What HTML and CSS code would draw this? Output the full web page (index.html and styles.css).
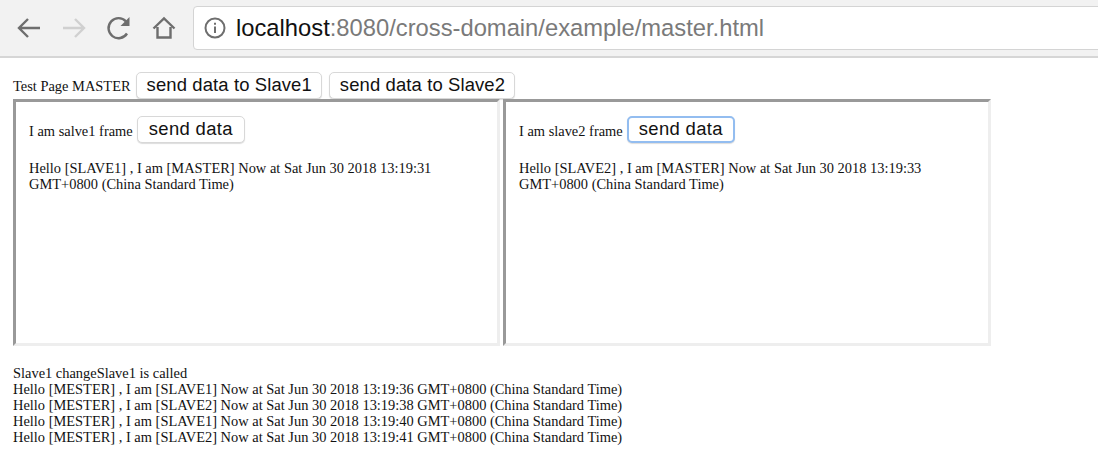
FILE: index.html
```html
<!DOCTYPE html>
<html lang="en">
<head>
  <meta charset="UTF-8" />
  <title>Test Page MASTER</title>
  <link rel="stylesheet" href="styles.css">
</head>
<body>

  <!-- BROWSER TOOLBAR -->
  <div class="toolbar">
    <div class="nav">
      <svg class="icon" viewBox="0 0 26 26" width="26" height="26"><path class="stroke dark" d="M24 13H3M12 4l-9 9 9 9"/></svg>
      <svg class="icon" viewBox="0 0 26 26" width="26" height="26"><path class="stroke light" d="M2 13h21M14 4l9 9-9 9"/></svg>
      <svg class="icon" viewBox="0 0 26 26" width="26" height="26"><path class="stroke dark" d="M21 18.500A10 10 0 1 1 20 6.500"/><path class="fill" d="M23.500 2v9h-9z"/></svg>
      <svg class="icon" viewBox="0 0 26 26" width="26" height="26"><path class="stroke dark" d="M2.500 13.500 13 3.500l10.500 10M6.500 12v10.500h13V12"/></svg>
    </div>
    <div class="address">
      <svg class="info" viewBox="0 0 22 22" width="22" height="22"><circle class="stroke dark thin" cx="11" cy="11" r="9.500"/><path class="fill" d="M10 9.500h2V16h-2zM10 5.800h2v2h-2z"/></svg>
      <span class="url"><b>localhost</b>:8080/cross-domain/example/master.html</span>
    </div>
  </div>

  <!-- MASTER PAGE -->
  <div class="page">
    <div class="head">
      <span>Test Page MASTER</span>
      <button class="btn wide">send data to Slave1</button>
      <button class="btn wide">send data to Slave2</button>
    </div>

    <div class="frames">
      <div class="frame">
        <div class="frame-head">
          <span>I am salve1 frame</span>
          <button class="btn">send data</button>
        </div>
        <p>Hello [SLAVE1] , I am [MASTER] Now at Sat Jun 30 2018 13:19:31 GMT+0800 (China Standard Time)</p>
      </div>
      <div class="frame">
        <div class="frame-head">
          <span>I am slave2 frame</span>
          <button class="btn focus">send data</button>
        </div>
        <p>Hello [SLAVE2] , I am [MASTER] Now at Sat Jun 30 2018 13:19:33 GMT+0800 (China Standard Time)</p>
      </div>
    </div>

    <div class="log">
      <div>Slave1 changeSlave1 is called</div>
      <div>Hello [MESTER] , I am [SLAVE1] Now at Sat Jun 30 2018 13:19:36 GMT+0800 (China Standard Time)</div>
      <div>Hello [MESTER] , I am [SLAVE2] Now at Sat Jun 30 2018 13:19:38 GMT+0800 (China Standard Time)</div>
      <div>Hello [MESTER] , I am [SLAVE1] Now at Sat Jun 30 2018 13:19:40 GMT+0800 (China Standard Time)</div>
      <div>Hello [MESTER] , I am [SLAVE2] Now at Sat Jun 30 2018 13:19:41 GMT+0800 (China Standard Time)</div>
    </div>
  </div>

</body>
</html>
```

FILE: styles.css
```css
html, body { margin: 0; height: 100%; overflow: hidden; background: #fff; }
body { font: 14.43px/16px "Liberation Serif", serif; color: #111; }

.toolbar { display: flex; align-items: center; height: 56px; background: #f2f2f2; border-bottom: 2px solid #d6d6d6; box-sizing: content-box; }
.nav { display: flex; gap: 19px; padding-left: 16px; width: 178px; box-sizing: border-box; flex-shrink: 0; }
.icon { display: block; flex-shrink: 0; }
.stroke { fill: none; stroke-width: 2.4; }
.stroke.thin { stroke-width: 2; }
.stroke.dark { stroke: #6e6e6e; }
.stroke.light { stroke: #d0d0d0; }
.fill { fill: #6e6e6e; }

.address { display: flex; align-items: center; flex: 1; height: 42px; margin-left: 15px; margin-right: -10px; padding-left: 10px; gap: 10px; background: #fff; border: 1px solid #d4d4d4; border-radius: 4px; }
.info { display: block; }
.url { font: 23.75px "Liberation Sans", sans-serif; color: #7a7a7a; white-space: nowrap; }
.url b { font-weight: 400; color: #111; }

.page { padding: 13px 0 0 13px; }
.head { display: flex; align-items: center; gap: 7px; height: 28px; }
.head span { margin-right: -2px; padding-top: 2px; }
.btn { height: 27px; padding: 0 9px 0 10px; font: 18.45px "Liberation Sans", sans-serif; letter-spacing: .12px; color: #111; background: #fff; border: 1px solid #d8d8d8; border-radius: 5px; box-shadow: 0 1px 1px #ddd; }
.frame .btn { padding: 0 11px; letter-spacing: .35px; }
.frame .btn.focus { border: 2px solid #93bdf0; padding: 0 10px; }

.frames { display: flex; gap: 3px; }
.frame { width: 487px; height: 247px; box-sizing: border-box; padding: 13px 13px; border: 3px solid; border-color: #999 #eee #eee #999; }
.frame + .frame { width: 488px; }
.frame-head { display: flex; align-items: center; gap: 4px; height: 28px; }
.frame-head span { padding-top: 4px; }
.frame p { margin: 17px 0 0; }

.log { margin-top: 19px; }
```
